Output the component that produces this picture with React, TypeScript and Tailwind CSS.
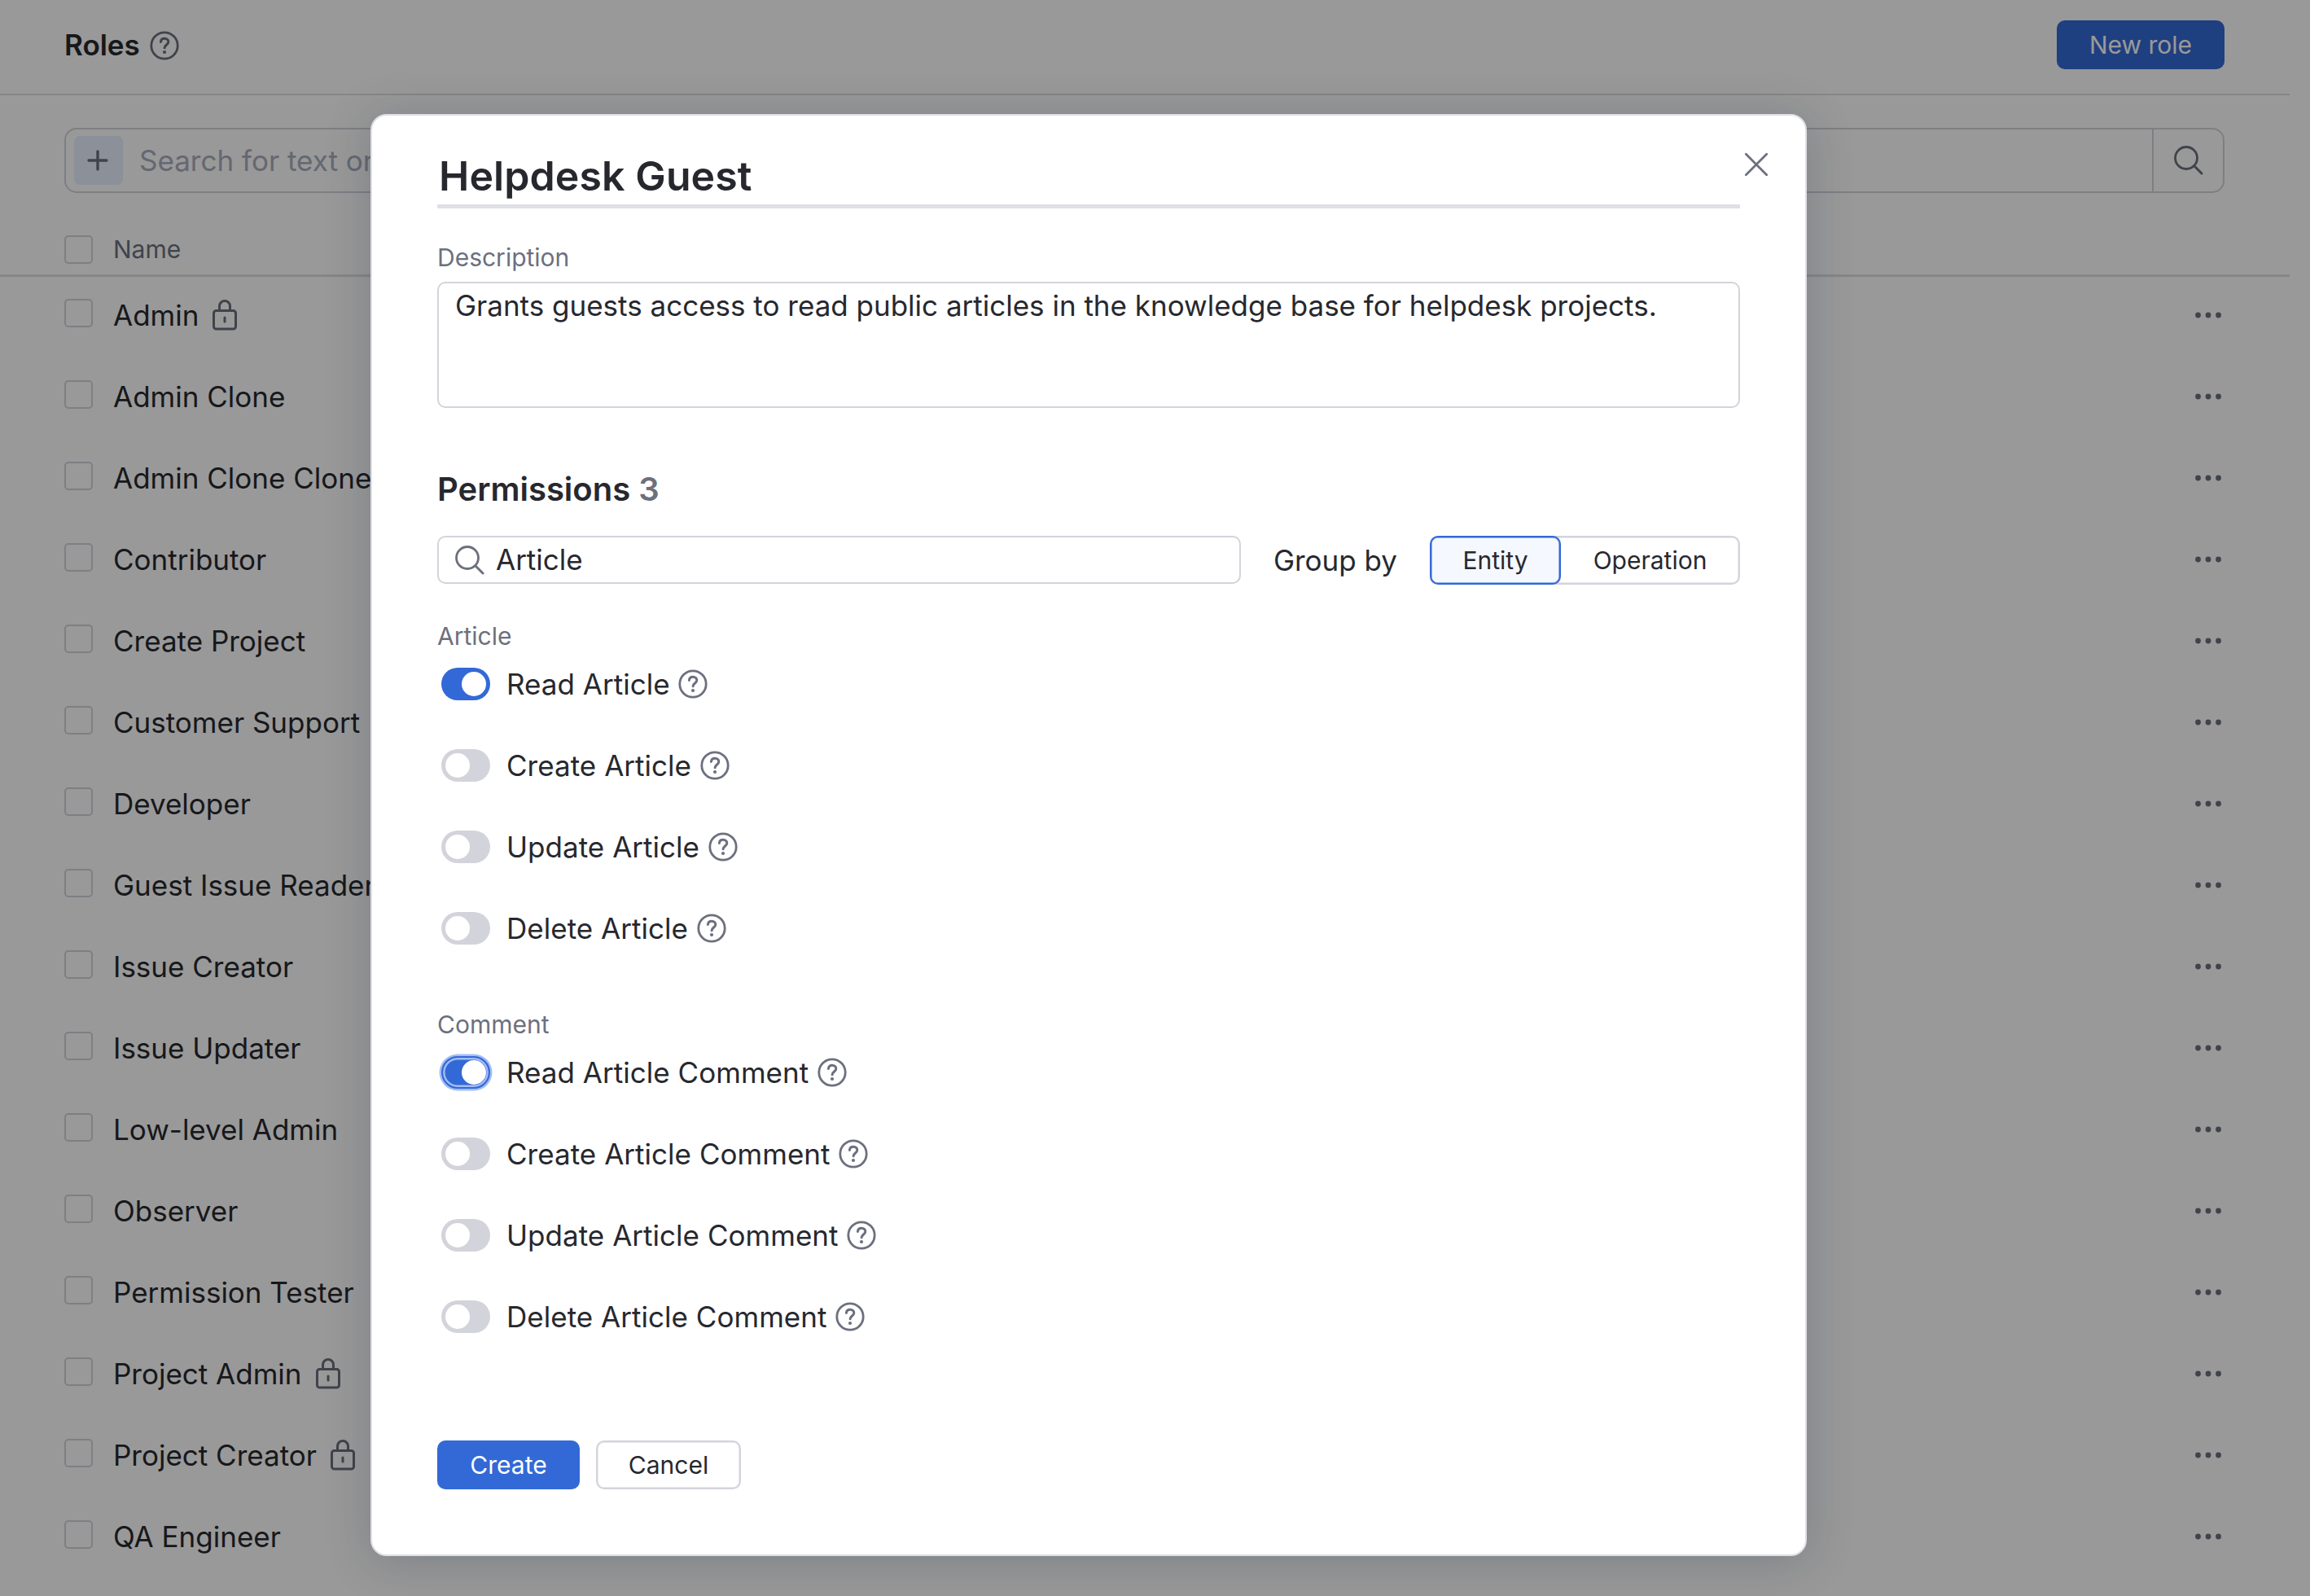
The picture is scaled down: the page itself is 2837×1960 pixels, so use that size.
import React from "react"

type Role = {
  name: string
  locked?: boolean
}

type Permission = {
  name: string
  enabled?: boolean
  focused?: boolean
}

type PermissionGroupProps = {
  title: string
  permissions: Permission[]
}

const roles: Role[] = [
  { name: "Admin", locked: true },
  { name: "Admin Clone" },
  { name: "Admin Clone Clone" },
  { name: "Contributor" },
  { name: "Create Project" },
  { name: "Customer Support" },
  { name: "Developer" },
  { name: "Guest Issue Reader" },
  { name: "Issue Creator" },
  { name: "Issue Updater" },
  { name: "Low-level Admin" },
  { name: "Observer" },
  { name: "Permission Tester" },
  { name: "Project Admin", locked: true },
  { name: "Project Creator", locked: true },
  { name: "QA Engineer" },
]

const articlePermissions: Permission[] = [
  { name: "Read Article", enabled: true },
  { name: "Create Article" },
  { name: "Update Article" },
  { name: "Delete Article" },
]

const commentPermissions: Permission[] = [
  { name: "Read Article Comment", enabled: true, focused: true },
  { name: "Create Article Comment" },
  { name: "Update Article Comment" },
  { name: "Delete Article Comment" },
]

const HelpIcon: React.FC = () => (
  <svg className="size-[36px] shrink-0 text-[#6c707e]" viewBox="0 0 36 36" fill="none">
    <circle cx="18" cy="18" r="16.2" stroke="currentColor" strokeWidth="2.8" />
    <path
      d="M13.4 13.4c.3-2.6 2.2-4.1 4.7-4.1 2.7 0 4.7 1.7 4.7 4.2 0 3.2-4.7 3.8-4.7 7.2"
      stroke="currentColor"
      strokeWidth="3"
      strokeLinecap="round"
    />
    <circle cx="18" cy="26" r="2.1" fill="currentColor" />
  </svg>
)

const SearchIcon: React.FC = () => (
  <svg className="size-[36px] shrink-0 text-[#6c707e]" viewBox="0 0 36 36" fill="none">
    <circle cx="15" cy="15" r="13.5" stroke="currentColor" strokeWidth="2.8" />
    <path d="M24.8 24.8l9.2 9.2" stroke="currentColor" strokeWidth="3" strokeLinecap="round" />
  </svg>
)

const LockIcon: React.FC = () => (
  <svg className="h-[38px] w-[30px] shrink-0 text-[#6c707e]" viewBox="0 0 30 38" fill="none">
    <rect x="1.5" y="13.5" width="27" height="22.5" rx="3" stroke="currentColor" strokeWidth="3" />
    <path d="M8.5 13V8a6.5 6.5 0 0 1 13 0v5" stroke="currentColor" strokeWidth="3" />
    <path d="M15 22v5" stroke="currentColor" strokeWidth="3" strokeLinecap="round" />
  </svg>
)

const Checkbox: React.FC = () => (
  <span className="size-[35px] shrink-0 rounded-[5px] border-2 border-[#d3d4db]" />
)

const RoleRow: React.FC<Role> = ({ name, locked }) => {
  return (
    <div className="flex h-[100px] items-start pl-[79px] pr-[84px] pt-[27px]">
      <Checkbox />
      <span className="ml-[25px] text-[35px] leading-[40px]">{name}</span>
      {locked && (
        <span className="ml-[17px] mt-px">
          <LockIcon />
        </span>
      )}
      <svg className="ml-auto mt-[16px] h-[8px] w-[32px] text-[#6c707e]" viewBox="0 0 32 8">
        <circle cx="3.5" cy="4" r="3.4" fill="currentColor" />
        <circle cx="16" cy="4" r="3.4" fill="currentColor" />
        <circle cx="28.5" cy="4" r="3.4" fill="currentColor" />
      </svg>
    </div>
  )
}

const Toggle: React.FC<{ enabled?: boolean; focused?: boolean }> = ({ enabled, focused }) => {
  if (focused) {
    return (
      <span className="flex h-[40px] w-[60px] shrink-0 items-center justify-end rounded-full border-2 border-[#3369d6] bg-[#3369d6] pr-[3px] shadow-[0_0_0_2.5px_#a3bdf8,inset_0_0_0_2.5px_#a3bdf8]">
        <span className="size-[30px] rounded-full bg-white" />
      </span>
    )
  }
  return (
    <span
      className={
        enabled
          ? "flex h-[40px] w-[60px] shrink-0 items-center justify-end rounded-full bg-[#3369d6] px-[5px]"
          : "flex h-[40px] w-[60px] shrink-0 items-center rounded-full bg-[#d3d4db] px-[5px]"
      }
    >
      <span className="size-[30px] rounded-full bg-white" />
    </span>
  )
}

const PermissionGroup: React.FC<PermissionGroupProps> = ({ title, permissions }) => {
  return (
    <div>
      <p className="text-[30px] leading-[40px] text-[#6c707e]">{title}</p>
      <div className="mt-[19px] flex flex-col gap-[60px] pl-[5px]">
        {permissions.map((item) => {
          return (
            <div className="flex h-[40px] items-center" key={item.name}>
              <Toggle enabled={item.enabled} focused={item.focused} />
              <span className="ml-[20px] mr-[10.5px] text-[35px] leading-[40px] tracking-[0.03px]">
                {item.name}
              </span>
              <HelpIcon />
            </div>
          )
        })}
      </div>
    </div>
  )
}

const RolesPage: React.FC = () => {
  return (
    <div className="h-[1960px] overflow-hidden">
      <div className="w-[2812px]">
        <div className="flex h-[117px] items-start border-b-2 border-[#e2e2e2] pl-[79px] pr-[80px] pt-[25px]">
          <h1 className="mt-[10px] text-[35px] font-semibold leading-[40px]">Roles</h1>
          <span className="ml-[12px] mt-[13px]">
            <HelpIcon />
          </span>
          <button className="ml-auto h-[60px] w-[206px] rounded-[10px] bg-[#3369d6] text-[30px] text-white">
            New role
          </button>
        </div>
        <div className="ml-[79px] mr-[80px] mt-[40px] flex h-[80px] items-center rounded-[15px] border-2 border-[#d3d4db] pl-[10px]">
          <span className="flex size-[60px] items-center justify-center rounded-[7px] bg-[#e8f1ff]">
            <svg className="mr-[2px] size-[26px] text-[#6c707e]" viewBox="0 0 26 26">
              <path d="M13 2v22M2 13h22" stroke="currentColor" strokeWidth="3.4" strokeLinecap="round" />
            </svg>
          </span>
          <span className="ml-[20px] text-[35px] text-[#a8adbd]">Search for text or</span>
          <span className="ml-auto flex h-full w-[87px] items-center border-l-2 border-[#d3d4db] pl-[25px]">
            <SearchIcon />
          </span>
        </div>
        <div className="flex h-[103px] items-start border-b-3 border-[#e0e0e0] pl-[79px] pt-[52px]">
          <Checkbox />
          <span className="ml-[25px] text-[30px] leading-[35px] text-[#6c707e]">Name</span>
        </div>
        {roles.map((item) => {
          return <RoleRow key={item.name} name={item.name} locked={item.locked} />
        })}
      </div>
    </div>
  )
}

const RoleDialog: React.FC = () => {
  return (
    <div className="absolute left-[455px] top-[140px] h-[1771px] w-[1764px] rounded-[20px] border-2 border-[#dfe0e5] bg-white pl-[80px] pr-[80px] shadow-[0_6px_60px_rgba(0,28,54,0.2)]">
      <svg className="absolute right-[45px] top-[45px] size-[30px] text-[#6c707e]" viewBox="0 0 30 30">
        <path d="M2.3 2.3l25.4 25.4M27.7 2.3L2.3 27.7" stroke="currentColor" strokeWidth="2.8" strokeLinecap="round" />
      </svg>
      <h2 className="mt-[40px] h-[74px] border-b-5 border-[#dfe0e5] pl-[2px] text-[50px] font-semibold leading-[68px] tracking-[0.1px]">
        Helpdesk Guest
      </h2>
      <p className="mt-[40px] text-[30px] leading-[40px] text-[#6c707e]">Description</p>
      <div className="mt-[10px] h-[155px] rounded-[10px] border-2 border-[#d3d4db] px-[20px] pt-[5px] text-[35px] leading-[45px]">
        Grants guests access to read public articles in the knowledge base for helpdesk projects.
      </div>
      <h3 className="mt-[75px] text-[40px] font-semibold leading-[50px]">
        Permissions <span className="text-[#6c707e]">3</span>
      </h3>
      <div className="mt-[32px] flex h-[60px] items-start">
        <div className="flex h-[59px] w-[987px] items-center rounded-[10px] border-2 border-[#d3d4db] pl-[20px]">
          <SearchIcon />
          <span className="ml-[14px] text-[35px]">Article</span>
        </div>
        <span className="ml-auto mr-[40px] text-[35px] leading-[60px]">Group by</span>
        <div className="flex h-[60px] text-[30px]">
          <button className="relative w-[161px] rounded-[10px] border-2 border-[#3369d6] bg-[#f5f8ff] shadow-[inset_0_0_0_0.5px_#3369d6]">
            Entity
          </button>
          <button className="-ml-[10px] w-[230px] rounded-r-[10px] border-2 border-l-0 border-[#d3d4db] pl-[11px] shadow-[inset_0_0_0_0.5px_#d3d4db]">
            Operation
          </button>
        </div>
      </div>
      <div className="mt-[43px] flex flex-col gap-[78px]">
        <PermissionGroup title="Article" permissions={articlePermissions} />
        <PermissionGroup title="Comment" permissions={commentPermissions} />
      </div>
      <div className="mt-[132px] flex gap-[20px] text-[30px]">
        <button className="h-[60px] w-[175px] rounded-[10px] bg-[#3369d6] text-white">Create</button>
        <button className="h-[60px] w-[178px] rounded-[10px] border-2 border-[#d3d4db] shadow-[inset_0_0_0_0.5px_#d3d4db]">
          Cancel
        </button>
      </div>
    </div>
  )
}

const App: React.FC = () => {
  return (
    <div className="relative h-[1960px] w-[2837px] overflow-hidden bg-white font-[Inter,sans-serif] text-[#27282e]">
      <RolesPage />
      <div className="absolute inset-0 bg-black/40" />
      <RoleDialog />
    </div>
  )
}

export default App
